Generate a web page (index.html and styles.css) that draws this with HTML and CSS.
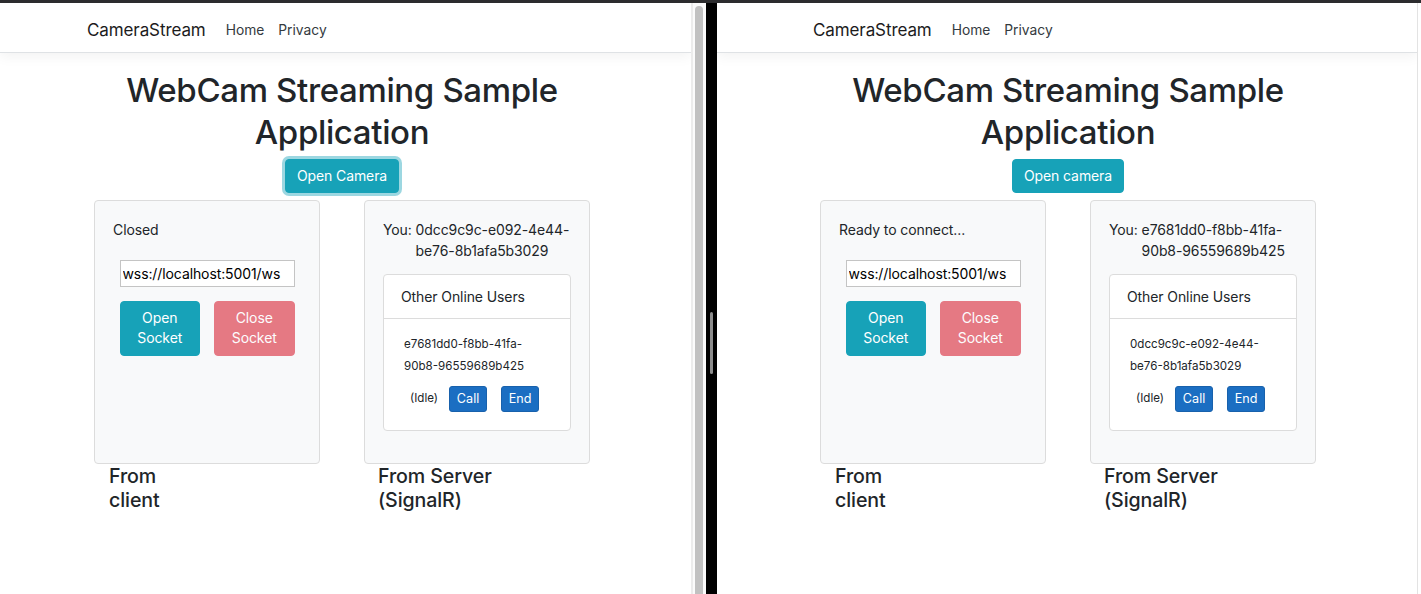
FILE: index.html
```html
<!DOCTYPE html>
<html lang="en">
<head>
<meta charset="utf-8">
<title>CameraStream</title>
<link rel="stylesheet" href="styles.css">
</head>
<body>
<div class="screen">
  <div class="topbar"></div>
  <div class="desk">
    <section class="win win-left">
      <header class="navbar">
        <div class="nav-inner">
          <span class="brand">CameraStream</span>
          <a class="nav-link">Home</a>
          <a class="nav-link">Privacy</a>
        </div>
      </header>
      <main class="main">
        <h1 class="title">WebCam Streaming Sample<br>Application</h1>
        <div class="actions"><button class="btn btn-info btn-cam focused">Open Camera</button></div>
        <div class="panels">
          <div class="card">
            <p class="status">Closed</p>
            <div class="socket">
              <input class="url" value="wss://localhost:5001/ws">
              <div class="socket-btns">
                <button class="btn btn-info btn-wrap">Open<br>Socket</button>
                <button class="btn btn-danger btn-wrap disabled">Close<br>Socket</button>
              </div>
            </div>
          </div>
          <div class="card">
            <div class="you"><span class="you-label">You:&nbsp;</span><span class="you-id">0dcc9c9c-e092-4e44-<br>be76-8b1afa5b3029</span></div>
            <div class="users">
              <div class="users-head">Other Online Users</div>
              <div class="users-body">
                <div class="uid">e7681dd0-f8bb-41fa-<br>90b8-96559689b425</div>
                <div class="urow">
                  <span class="state">(Idle)</span>
                  <button class="btn btn-primary btn-sm btn-call">Call</button>
                  <button class="btn btn-primary btn-sm">End</button>
                </div>
              </div>
            </div>
          </div>
          <div class="caption">From<br>client</div>
          <div class="caption">From Server<br>(SignalR)</div>
        </div>
      </main>
    </section>

    <div class="vscroll"><div class="thumb"></div></div>
    <div class="divider"><div class="grip"></div></div>

    <section class="win win-right">
      <header class="navbar">
        <div class="nav-inner">
          <span class="brand">CameraStream</span>
          <a class="nav-link">Home</a>
          <a class="nav-link">Privacy</a>
        </div>
      </header>
      <main class="main">
        <h1 class="title">WebCam Streaming Sample<br>Application</h1>
        <div class="actions"><button class="btn btn-info btn-cam">Open camera</button></div>
        <div class="panels">
          <div class="card">
            <p class="status">Ready to connect...</p>
            <div class="socket">
              <input class="url" value="wss://localhost:5001/ws">
              <div class="socket-btns">
                <button class="btn btn-info btn-wrap">Open<br>Socket</button>
                <button class="btn btn-danger btn-wrap disabled">Close<br>Socket</button>
              </div>
            </div>
          </div>
          <div class="card">
            <div class="you"><span class="you-label">You:&nbsp;</span><span class="you-id">e7681dd0-f8bb-41fa-<br>90b8-96559689b425</span></div>
            <div class="users">
              <div class="users-head">Other Online Users</div>
              <div class="users-body">
                <div class="uid">0dcc9c9c-e092-4e44-<br>be76-8b1afa5b3029</div>
                <div class="urow">
                  <span class="state">(Idle)</span>
                  <button class="btn btn-primary btn-sm btn-call">Call</button>
                  <button class="btn btn-primary btn-sm">End</button>
                </div>
              </div>
            </div>
          </div>
          <div class="caption">From<br>client</div>
          <div class="caption">From Server<br>(SignalR)</div>
        </div>
      </main>
    </section>
    <div class="rtrack"></div>
  </div>
</div>
</body>
</html>
```

FILE: styles.css
```css
* {
  box-sizing: border-box;
  margin: 0;
  padding: 0;
}

html, body {
  margin: 0;
  background: #fff;
  overflow: hidden;
}

body {
  font-family: Inter, "Liberation Sans", sans-serif;
  color: #212529;
  font-size: 14px;
  letter-spacing: -0.1px;
  line-height: 1.5;
}

.screen {
  width: 1421px;
  height: 594px;
  display: flex;
  flex-direction: column;
}

.topbar {
  height: 3px;
  flex: none;
  background: #2c2c2e;
}

.desk {
  flex: 1;
  display: flex;
  min-height: 0;
}

/* ---------- browser windows ---------- */
.win {
  --pad: 87px;
  flex: none;
  overflow: hidden;
  background: #fff;
}

.win-left { width: 691px; }
.win-right { width: 700px; --pad: 96px; }

.vscroll {
  flex: none;
  width: 15px;
  border-left: 2px solid #ececec;
  background: #fbfbfb;
  padding: 3px 0 0 2px;
  display: flex;
}

.thumb {
  width: 8px;
  background: #c1c1c1;
  border-radius: 4px 4px 0 0;
}

.divider {
  flex: none;
  width: 11px;
  background: #000;
  padding: 309px 0 0 4px;
}

.grip {
  width: 3px;
  height: 62px;
  border-radius: 2px;
  background: #8c8c8c;
}

.rtrack {
  flex: 1;
  border-left: 1px solid #e3e3e3;
  background: #fff;
}

/* ---------- navbar ---------- */
.navbar {
  height: 50px;
  border-bottom: 1px solid #dfe2e5;
  background: #fff;
  box-shadow: 0 4px 12px rgba(0, 0, 0, 0.05);
  display: flex;
  align-items: center;
  padding: 5px 0 0 var(--pad);
}

.nav-inner {
  display: flex;
  align-items: center;
}

.brand {
  font-size: 17px;
  letter-spacing: -0.1px;
  line-height: 27px;
  color: #1c1c1c;
  margin-right: 13px;
}

.nav-link {
  font-size: 13.8px;
  letter-spacing: 0;
  line-height: 21.6px;
  color: #343a40;
  padding: 2px 7px 0;
}

/* ---------- main ---------- */
.main {
  padding-left: var(--pad);
  width: calc(var(--pad) + 510px);
}

.title {
  font-size: 33px;
  font-weight: 500;
  letter-spacing: -0.35px;
  line-height: 42px;
  text-align: center;
  margin-top: 16px;
  color: #212529;
}

.actions {
  display: flex;
  justify-content: center;
  margin-top: 6px;
}

.btn {
  font-family: inherit;
  font-size: 14px;
  letter-spacing: -0.1px;
  line-height: 21.6px;
  border: 1px solid transparent;
  border-radius: 4px;
  color: #fff;
  cursor: pointer;
}

.btn-info {
  background: #17a2b8;
  border-color: #17a2b8;
}

.btn-danger {
  background: #dc3545;
  border-color: #dc3545;
}

.btn.disabled {
  opacity: 0.65;
}

.btn-primary {
  background: #1b6ec2;
  border-color: #1861ac;
}

.btn-cam {
  height: 34px;
  padding: 5px 10.5px;
}

.btn-cam.focused {
  box-shadow: 0 0 0 3px rgba(58, 176, 195, 0.5);
}

.panels {
  display: grid;
  grid-template-columns: 270px 270px;
  margin-top: 7px;
}

.card {
  width: 226px;
  margin-left: 7px;
  background: #f8f9fa;
  border: 1px solid #dcdcdc;
  border-radius: 4px;
  padding: 18px;
}

.status {
  line-height: 21.6px;
}

.socket {
  width: 175px;
  margin: 19px auto 0;
}

.url {
  display: block;
  width: 175px;
  height: 27px;
  border: 1px solid #c4c4c4;
  background: #fff;
  font-family: inherit;
  font-size: 14px;
  letter-spacing: -0.1px;
  color: #000;
  padding: 0 2px;
}

.socket-btns {
  display: flex;
  gap: 14px;
  margin-top: 14px;
}

.btn-wrap {
  flex: 1;
  height: 55px;
  line-height: 20.5px;
  padding: 6px 4px;
}

.you {
  display: flex;
  line-height: 21px;
  white-space: nowrap;
}

.users {
  margin-top: 13px;
  background: #fff;
  border: 1px solid #dcdcdc;
  border-radius: 4px;
  margin-bottom: 14px;
}

.users-head {
  padding: 10.5px 17px;
  line-height: 21.6px;
  border-bottom: 1px solid #dcdcdc;
}

.users-body {
  padding: 14px 18px 18px;
}

.uid {
  font-size: 11.6px;
  letter-spacing: 0;
  line-height: 22px;
  padding-left: 2px;
  white-space: nowrap;
}

.urow {
  display: flex;
  justify-content: center;
  align-items: center;
  margin-top: 9px;
  padding-right: 5px;
}

.state {
  font-size: 11.6px;
  letter-spacing: 0;
  margin-right: 11px;
}

.btn-sm {
  width: 38px;
  height: 26px;
  font-size: 12.6px;
  letter-spacing: 0;
  line-height: 18px;
  padding: 0;
  border-radius: 3px;
}

.btn-call {
  margin-right: 14px;
}

.caption {
  font-size: 19.6px;
  font-weight: 500;
  letter-spacing: -0.1px;
  line-height: 24px;
  padding-left: 22px;
}

.caption + .caption {
  padding-left: 21px;
}
```
